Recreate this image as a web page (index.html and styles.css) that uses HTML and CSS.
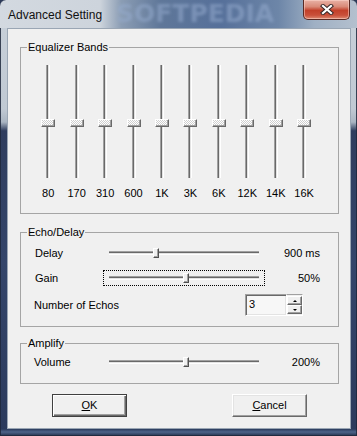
FILE: index.html
```html
<!DOCTYPE html>
<html>
<head>
<meta charset="utf-8">
<link rel="stylesheet" href="styles.css">
</head>
<body>
<div class="window">
  <div class="titlebar">
    <span class="title">Advanced Setting</span>
    <span class="wm">SOFTPEDIA</span>
    <div class="close">
      <svg width="14" height="11" viewBox="0 0 14 11">
        <path d="M3 2 L11 9 M11 2 L3 9" stroke="#3a2a2a" stroke-width="4.2" stroke-linecap="square"/>
        <path d="M3 2 L11 9 M11 2 L3 9" stroke="#ffffff" stroke-width="2.2" stroke-linecap="square"/>
      </svg>
    </div>
  </div>
  <div class="client">
    <fieldset class="group eq">
      <legend>Equalizer Bands</legend>
      <div class="bands">
        <div class="band"><div class="vslider"><div class="vtrack"></div><div class="vthumb"></div></div><span class="blabel">80</span></div>
        <div class="band"><div class="vslider"><div class="vtrack"></div><div class="vthumb"></div></div><span class="blabel">170</span></div>
        <div class="band"><div class="vslider"><div class="vtrack"></div><div class="vthumb"></div></div><span class="blabel">310</span></div>
        <div class="band"><div class="vslider"><div class="vtrack"></div><div class="vthumb"></div></div><span class="blabel">600</span></div>
        <div class="band"><div class="vslider"><div class="vtrack"></div><div class="vthumb"></div></div><span class="blabel">1K</span></div>
        <div class="band"><div class="vslider"><div class="vtrack"></div><div class="vthumb"></div></div><span class="blabel">3K</span></div>
        <div class="band"><div class="vslider"><div class="vtrack"></div><div class="vthumb"></div></div><span class="blabel">6K</span></div>
        <div class="band"><div class="vslider"><div class="vtrack"></div><div class="vthumb"></div></div><span class="blabel">12K</span></div>
        <div class="band"><div class="vslider"><div class="vtrack"></div><div class="vthumb"></div></div><span class="blabel">14K</span></div>
        <div class="band"><div class="vslider"><div class="vtrack"></div><div class="vthumb"></div></div><span class="blabel">16K</span></div>
      </div>
    </fieldset>

    <fieldset class="group echo">
      <legend>Echo/Delay</legend>
      <div class="rows">
        <div class="row r1">
          <span class="lbl">Delay</span>
          <div class="hbox"><div class="hslider"><div class="htrack"></div><div class="hthumb" style="left:31%"></div></div></div>
          <span class="val">900 ms</span>
        </div>
        <div class="row r2">
          <span class="lbl">Gain</span>
          <div class="hbox focus"><div class="hslider"><div class="htrack"></div><div class="hthumb" style="left:51%"></div></div></div>
          <span class="val">50%</span>
        </div>
        <div class="row3">
          <span class="lbl">Number of Echos</span>
          <div class="spin">
            <div class="edit">3</div>
            <div class="spinbtns">
              <div class="sbtn"><span class="tri up"></span></div>
              <div class="sbtn"><span class="tri down"></span></div>
            </div>
          </div>
        </div>
      </div>
    </fieldset>

    <fieldset class="group amp">
      <legend>Amplify</legend>
      <div class="rows">
        <div class="row r1 vol">
          <span class="lbl">Volume</span>
          <div class="hbox"><div class="hslider"><div class="htrack"></div><div class="hthumb" style="left:51%"></div></div></div>
          <span class="val">200%</span>
        </div>
      </div>
    </fieldset>

    <div class="buttons">
      <div class="btn default"><u>O</u>K</div>
      <div class="btn"><u>C</u>ancel</div>
    </div>
  </div>
</div>
</body>
</html>
```
FILE: styles.css
```css
html, body {
  margin: 0;
  padding: 0;
  background: #2c3a58;
}
.window {
  width: 357px;
  height: 436px;
  box-sizing: border-box;
  display: flex;
  flex-direction: column;
  padding: 0 6px 7px 7px;
  border-radius: 6px 6px 0 0;
  background:
    linear-gradient(180deg, rgba(0,0,0,0) 0, rgba(0,0,0,0) 428px, #2a3a5c 429px, #4d6388 432px, #23304c 436px),
    linear-gradient(180deg, #c9d1da 0%, #c0c9d3 25%, #aab5c2 28%, #2f3d5e 30%, #34456a 60%, #2b3a5c 100%);
  box-shadow: inset 0 0 0 1px rgba(30, 40, 60, 0.85);
  overflow: hidden;
}
.titlebar {
  position: relative;
  height: 28px;
  flex: none;
  display: flex;
  align-items: flex-start;
  margin: 0 -6px 0 -7px;
  padding: 0 6px 0 8px;
  background: linear-gradient(90deg, #d3d9e0 0%, #cdd4dc 28%, #8b9db4 34%, #5f7799 45%, #56709a 62%, #6d86a8 78%, #9fb0c4 88%, #b4c0ce 100%);
  border-radius: 6px 6px 0 0;
  overflow: hidden;
}
.title {
  position: relative;
  z-index: 2;
  margin-top: 7px;
  font: 12px/16px "Liberation Sans", Arial, sans-serif;
  color: #111;
}
.wm {
  position: absolute;
  left: 116px;
  top: 0;
  font: bold 25px/28px "DejaVu Sans", sans-serif;
  letter-spacing: 0;
  color: rgba(150, 172, 205, 0.55);
  filter: blur(1.4px);
  z-index: 1;
}
.close {
  position: relative;
  z-index: 2;
  margin-left: auto;
  margin-right: 1px;
  width: 47px;
  height: 20px;
  box-sizing: border-box;
  border: 1px solid #5a2a24;
  border-top: none;
  border-radius: 0 0 5px 5px;
  background: linear-gradient(180deg, #e9b2a6 0%, #d98a78 35%, #c2402a 55%, #c9503a 80%, #dd8a72 100%);
  box-shadow: inset 0 0 0 1px rgba(255, 220, 210, 0.5);
  display: flex;
  align-items: center;
  justify-content: center;
}
.close svg { display: block; }

.client {
  height: 401px;
  flex: none;
  box-sizing: border-box;
  border: 1px solid #9aa6b4;
  background: #f0f0f0;
  padding: 12px 11px 0 12px;
  display: flex;
  flex-direction: column;
  font: 11px/13px "Liberation Sans", Arial, sans-serif;
  color: #000;
}
.group {
  margin: 0;
  padding: 0;
  border: 1px solid #a5a5a5;
  min-width: 0;
}
.group legend {
  margin-left: 6px;
  padding: 0 1px;
  font: 11px/13px "Liberation Sans", Arial, sans-serif;
  height: 13px;
}
.echo { margin-top: 12px; }
.amp { margin-top: 10px; }

/* equalizer */
.bands {
  display: grid;
  grid-template-columns: repeat(10, 28.44px);
  padding: 11px 0 13px 13px;
}
.band {
  display: flex;
  flex-direction: column;
  align-items: center;
}
.vslider {
  position: relative;
  width: 14px;
  height: 113px;
  display: flex;
  justify-content: center;
}
.vtrack {
  width: 4px;
  height: 100%;
  background: linear-gradient(90deg, #a0a0a0 0 1px, #696969 1px 2px, #e3e3e3 2px 3px, #ffffff 3px 4px);
}
.vthumb {
  position: absolute;
  left: 0;
  top: 54px;
  width: 14px;
  height: 8px;
  box-sizing: border-box;
  border: 1px solid;
  border-color: #ffffff #696969 #696969 #ffffff;
  box-shadow: inset -1px -1px 0 #a0a0a0;
  background: repeating-conic-gradient(#ffffff 0 25%, #cfcfcf 0 50%) 0 0 / 2px 2px;
}
.blabel {
  margin-top: 9px;
  height: 13px;
  white-space: nowrap;
}

/* echo rows */
.rows {
  display: flex;
  flex-direction: column;
  padding: 0 17px 0 14px;
}
.echo .rows { padding-bottom: 10px; }
.amp .rows { padding-bottom: 14px; }
.row {
  display: grid;
  grid-template-columns: 68px 162px 55px;
  align-items: center;
}
.r1 { height: 14px; margin-top: 7px; }
.vol { margin-top: 5px; }
.vol .lbl { margin-left: -1px; }
.r2 { height: 16px; margin-top: 10px; }
.val { text-align: right; white-space: nowrap; }
.hbox {
  height: 100%;
  box-sizing: border-box;
  border: 1px solid transparent;
  padding: 0 5px;
  display: flex;
  align-items: center;
}
.hbox.focus { border: 1px dotted #000; }
.hslider {
  position: relative;
  width: 150px;
  height: 12px;
  display: flex;
  align-items: center;
}
.htrack {
  width: 100%;
  height: 4px;
  background: linear-gradient(180deg, #a0a0a0 0 1px, #696969 1px 2px, #e3e3e3 2px 3px, #ffffff 3px 4px);
}
.hthumb {
  position: absolute;
  top: 1px;
  width: 6px;
  height: 10px;
  margin-left: -3px;
  box-sizing: border-box;
  border: 1px solid;
  border-color: #ffffff #505050 #505050 #ffffff;
  box-shadow: inset -1px -1px 0 #a0a0a0;
  background: #f0f0f0;
}
.row3 {
  display: flex;
  align-items: center;
  justify-content: space-between;
  margin-top: 8px;
  height: 22px;
  padding-right: 18px;
}
.row3 .lbl { margin-left: -1px; }
.spin {
  display: flex;
  height: 22px;
}
.edit {
  width: 42px;
  height: 22px;
  box-sizing: border-box;
  border: 1px solid;
  border-color: #a0a0a0 #ffffff #ffffff #a0a0a0;
  box-shadow: inset 1px 1px 0 #696969, inset -1px -1px 0 #e3e3e3;
  background: #f7f7f7;
  padding: 3px 0 0 3px;
}
.spinbtns {
  width: 16px;
  display: flex;
  flex-direction: column;
  border-right: 1px solid #fff;
  border-top: 1px solid #a0a0a0;
  border-bottom: 1px solid #fff;
  box-sizing: border-box;
  height: 22px;
  padding: 1px 0;
}
.sbtn {
  flex: 1;
  box-sizing: border-box;
  border: 1px solid;
  border-color: #ffffff #696969 #696969 #ffffff;
  box-shadow: inset -1px -1px 0 #a0a0a0;
  background: #f0f0f0;
  display: flex;
  align-items: center;
  justify-content: center;
}
.tri {
  width: 0;
  height: 0;
  border-left: 2px solid transparent;
  border-right: 2px solid transparent;
}
.tri.up { border-bottom: 2px solid #000; }
.tri.down { border-top: 2px solid #000; }

/* buttons */
.buttons {
  display: flex;
  margin-top: 10px;
  padding-left: 32px;
  gap: 105px;
}
.btn {
  width: 75px;
  height: 23px;
  box-sizing: border-box;
  border: 1px solid;
  border-color: #ffffff #696969 #696969 #ffffff;
  box-shadow: inset -1px -1px 0 #a0a0a0, inset 1px 1px 0 #e3e3e3;
  background: #f0f0f0;
  display: flex;
  align-items: center;
  justify-content: center;
  font: 11px/13px "Liberation Sans", Arial, sans-serif;
}
.btn.default {
  border: 1px solid #404040;
  box-shadow: inset 1px 1px 0 #ffffff, inset -1px -1px 0 #696969, inset -2px -2px 0 #a0a0a0;
}
.btn u { text-decoration-thickness: 1px; text-underline-offset: 1px; }
```
